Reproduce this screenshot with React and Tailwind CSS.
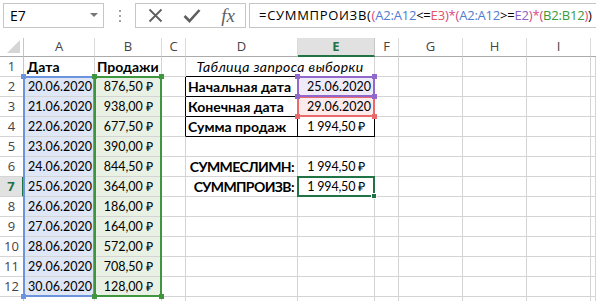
import React from 'react';

const dates = ['20.06.2020','21.06.2020','22.06.2020','23.06.2020','24.06.2020','25.06.2020','26.06.2020','27.06.2020','28.06.2020','29.06.2020','30.06.2020'];
const sales = ['876,50 ₽','938,00 ₽','677,50 ₽','390,00 ₽','844,50 ₽','364,00 ₽','186,00 ₽','164,00 ₽','572,00 ₽','708,50 ₽','128,00 ₽'];
const LETTERS = ['A','B','C','D','E','F','G','H','I'];
const RS = ['', 'row-start-1','row-start-2','row-start-3','row-start-4','row-start-5','row-start-6','row-start-7','row-start-8','row-start-9','row-start-10','row-start-11','row-start-12','row-start-13','row-start-14'];
const CS = ['', 'col-start-1','col-start-2','col-start-3','col-start-4','col-start-5','col-start-6','col-start-7','col-start-8','col-start-9','col-start-10','col-start-11'];

function Cell({ row, col, r = 'g', b = 'g', bg = '', align = 'start', className = '', children }) {
  const rc = r === 'k' ? 'border-r-black' : 'border-r-[#d4d4d4]';
  const bc = b === 'k' ? 'border-b-black' : 'border-b-[#d4d4d4]';
  const al = align === 'end' ? 'justify-end' : align === 'center' ? 'justify-center' : 'justify-start';
  return (
    <div className={`${RS[row]} ${CS[col]} border-r border-b ${rc} ${bc} ${bg} ${al} flex items-end whitespace-nowrap leading-[18px] text-black ${className}`}>
      {children}
    </div>
  );
}

function RowHead({ row, n, selected }) {
  return selected ? (
    <div className={`${RS[row]} col-start-1 border-b border-b-[#d4d4d4] border-r-2 border-r-[#217346] bg-[#e1e1e1] flex items-center justify-center text-[13px] font-bold text-[#217346] font-['Open_Sans',sans-serif]`}>{n}</div>
  ) : (
    <div className={`${RS[row]} col-start-1 border-b border-r border-b-[#d4d4d4] border-r-[#c6c6c6] bg-white flex items-center justify-center text-[13px] text-[#444] font-['Open_Sans',sans-serif]`}>{n}</div>
  );
}

function Squares({ color, corners = ['tl','tr','bl','br'] }) {
  const pos = { tl: '-left-[4px] -top-[4px]', tr: '-right-[4px] -top-[4px]', bl: '-left-[4px] -bottom-[4px]', br: '-right-[4px] -bottom-[4px]' };
  return corners.map((c) => (
    <div key={c} className={`absolute w-[5px] h-[5px] ${pos[c]} ${color}`} />
  ));
}

function FormulaBar() {
  const P = 'text-[#d9467f]';
  return (
    <div className="h-[38px] flex items-start pt-[3px] bg-white">
      <div className="ml-[3px] w-[101px] h-[25px] border border-[#c6c6c6] flex items-center justify-between pl-[6px] pr-[5px] text-[14px] text-black font-['Open_Sans',sans-serif]">
        <span>E7</span>
        <svg width="8" height="5" viewBox="0 0 8 5"><path d="M0 0 L8 0 L4 4 Z" fill="#777" /></svg>
      </div>
      <div className="w-[31px] h-[25px] flex flex-col items-center justify-center gap-[3px]">
        <div className="w-[2px] h-[2px] bg-[#a0a0a0]" />
        <div className="w-[2px] h-[2px] bg-[#a0a0a0]" />
        <div className="w-[2px] h-[2px] bg-[#a0a0a0]" />
      </div>
      <div className="w-[111px] h-[25px] border border-[#c6c6c6] flex items-center">
        <div className="w-[36px] flex justify-center ml-[1px]">
          <svg width="15" height="15" viewBox="0 0 15 15"><path d="M1.5 1.5 L13.5 13.5 M13.5 1.5 L1.5 13.5" stroke="#5f5f5f" strokeWidth="1.8" fill="none" /></svg>
        </div>
        <div className="w-[38px] flex justify-center">
          <svg width="18" height="15" viewBox="0 0 18 15"><path d="M1.5 8 L6.5 13 L16.5 2" stroke="#5f5f5f" strokeWidth="2.6" fill="none" /></svg>
        </div>
        <div className="w-[34px] flex justify-center text-[19px] leading-[20px] italic text-[#5f5f5f] font-['Liberation_Serif',serif]">fx</div>
      </div>
      <div className="ml-[3px] flex-1 h-[25px] border-y border-l border-[#c6c6c6] flex items-center pl-[9px] whitespace-nowrap overflow-hidden text-[13px] text-black font-['Open_Sans',sans-serif] tracking-[-0.2px]">
        <span className="tracking-[0.7px]">=СУММПРОИЗВ(</span>
        <span className={P}>(</span>
        <span className="text-[#4f7bd3]">A2:A12</span>
        <span>&lt;=</span>
        <span className="text-[#e8545c]">E3</span>
        <span className={P}>)</span>
        <span className={P}>*</span>
        <span className={P}>(</span>
        <span className="text-[#4f7bd3]">A2:A12</span>
        <span>&gt;=</span>
        <span className="text-[#8d62c6]">E2</span>
        <span className={P}>)</span>
        <span className={P}>*</span>
        <span className={P}>(</span>
        <span className="text-[#3a9a3a]">B2:B12</span>
        <span className={P}>)</span>
        <span>)</span>
      </div>
    </div>
  );
}

function Sheet() {
  const rows = [];
  const NUM = 'text-[12.5px]';
  const TXT = 'text-[14px]';
  const SUM = 'text-[12.5px] tracking-[-0.2px]';
  for (let i = 1; i <= 13; i++) {
    const g = i + 1;
    const cells = [];
    cells.push(<RowHead key="h" row={g} n={i} selected={i === 7} />);
    if (i === 1) cells.push(<Cell key="A" row={g} col={2} className={`font-bold pl-[3px] ${TXT}`}>Дата</Cell>);
    else if (i <= 12) cells.push(<Cell key="A" row={g} col={2} bg="bg-[#dfe6f6]" className={`pl-[4px] ${NUM}`}>{dates[i - 2]}</Cell>);
    else cells.push(<Cell key="A" row={g} col={2} />);
    if (i === 1) cells.push(<Cell key="B" row={g} col={3} className={`font-bold pl-[2px] ${TXT}`}>Продажи</Cell>);
    else if (i <= 12) cells.push(<Cell key="B" row={g} col={3} bg="bg-[#e9f1e5]" align="end" className={`pr-[8px] ${NUM}`}>{sales[i - 2]}</Cell>);
    else cells.push(<Cell key="B" row={g} col={3} />);
    cells.push(<Cell key="C" row={g} col={4} r={i >= 2 && i <= 4 ? 'k' : 'g'} />);
    if (i === 1) {
      cells.push(<Cell key="DE" row={g} col={5} b="k" align="center" className={`col-span-2 italic tracking-[0.4px] ${TXT}`}>Таблица запроса выборки</Cell>);
    } else if (i === 2) {
      cells.push(<Cell key="D" row={g} col={5} r="k" b="k" className={`font-bold pl-[2px] ${TXT}`}>Начальная дата</Cell>);
      cells.push(<Cell key="E" row={g} col={6} r="k" b="k" bg="bg-[#f0ebf8]" align="end" className={`pr-[3px] ${NUM}`}>25.06.2020</Cell>);
    } else if (i === 3) {
      cells.push(<Cell key="D" row={g} col={5} r="k" b="k" className={`font-bold pl-[2px] ${TXT}`}>Конечная дата</Cell>);
      cells.push(<Cell key="E" row={g} col={6} r="k" b="k" bg="bg-[#fdeaea]" align="end" className={`pr-[3px] ${NUM}`}>29.06.2020</Cell>);
    } else if (i === 4) {
      cells.push(<Cell key="D" row={g} col={5} r="k" b="k" className={`font-bold pl-[2px] ${TXT}`}>Сумма продаж</Cell>);
      cells.push(<Cell key="E" row={g} col={6} r="k" b="k" align="end" className={`pr-[9px] ${SUM}`}>1 994,50 ₽</Cell>);
    } else if (i === 6) {
      cells.push(<Cell key="D" row={g} col={5} align="end" className={`font-bold pr-[3px] tracking-[-0.6px] ${TXT}`}>СУММЕСЛИМН:</Cell>);
      cells.push(<Cell key="E" row={g} col={6} align="end" className={`pr-[9px] ${SUM}`}>1 994,50 ₽</Cell>);
    } else if (i === 7) {
      cells.push(<Cell key="D" row={g} col={5} align="end" className={`font-bold pr-[3px] tracking-[-0.6px] ${TXT}`}>СУММПРОИЗВ:</Cell>);
      cells.push(<Cell key="E" row={g} col={6} align="end" className={`pr-[9px] ${SUM}`}>1 994,50 ₽</Cell>);
    } else {
      cells.push(<Cell key="D" row={g} col={5} />);
      cells.push(<Cell key="E" row={g} col={6} />);
    }
    for (let c = 7; c <= 11; c++) cells.push(<Cell key={c} row={g} col={c} />);
    rows.push(<React.Fragment key={i}>{cells}</React.Fragment>);
  }

  return (
    <div className="grid grid-cols-[24px_71px_67px_24px_112px_77px_24px_64px_64px_64px_1fr] grid-rows-[19px_repeat(13,20px)] font-['Lato',sans-serif]">
      <div className="row-start-1 col-start-1 relative border-r border-b border-r-[#c6c6c6] border-b-[#ababab] bg-white">
        <svg className="absolute right-[3px] bottom-[3px]" width="13" height="13" viewBox="0 0 13 13"><path d="M13 0 L13 13 L0 13 Z" fill="#d6d6d6" /></svg>
      </div>
      {LETTERS.map((L, idx) =>
        L === 'E' ? (
          <div key={L} className={`row-start-1 ${CS[idx + 2]} border-r border-r-[#c6c6c6] border-b-2 border-b-[#217346] bg-[#e1e1e1] flex items-center justify-center text-[13px] font-bold text-[#217346] font-['Open_Sans',sans-serif]`}>E</div>
        ) : (
          <div key={L} className={`row-start-1 ${CS[idx + 2]} border-r border-b border-r-[#dadada] border-b-[#ababab] bg-white flex items-center justify-center text-[13px] text-[#444] font-['Open_Sans',sans-serif]`}>{L}</div>
        )
      )}
      <div className="row-start-1 col-start-11 border-b border-b-[#ababab] bg-white" />
      {rows}

      <div className="col-start-2 row-start-3 row-end-14 -mt-px -ml-px relative border-2 border-[#6b93de] pointer-events-none">
        <Squares color="bg-[#6b93de]" />
      </div>
      <div className="col-start-3 row-start-3 row-end-14 -mt-px -ml-px relative border-2 border-[#3f963f] pointer-events-none">
        <Squares color="bg-[#3f963f]" />
      </div>
      <div className="col-start-6 row-start-4 -mt-px -ml-px relative border-2 border-[#e86a6a] pointer-events-none">
        <Squares color="bg-[#e86a6a]" />
      </div>
      <div className="col-start-6 row-start-3 -mt-px -ml-px relative border-2 border-[#9168cc] pointer-events-none">
        <Squares color="bg-[#9168cc]" />
      </div>
      <div className="col-start-6 row-start-8 -mt-px -ml-px relative border-2 border-[#217346] pointer-events-none">
        <div className="absolute -right-[4px] -bottom-[4px] w-[6px] h-[6px] bg-[#217346] border border-white" />
      </div>
    </div>
  );
}

export default function App() {
  return (
    <div className="w-[596px] h-[301px] bg-white overflow-hidden">
      <FormulaBar />
      <Sheet />
    </div>
  );
}
